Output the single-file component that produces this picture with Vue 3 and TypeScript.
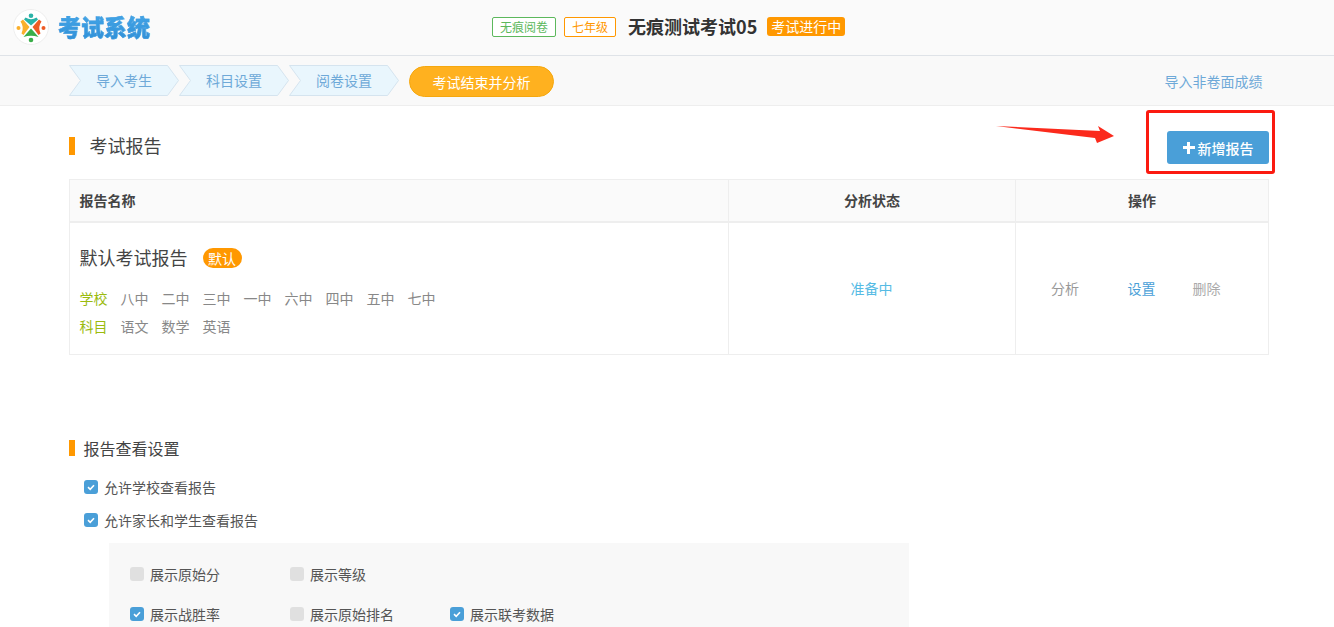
<script setup lang="ts">
interface Step { label: string }
const steps: Step[] = [{ label: '导入考生' }, { label: '科目设置' }, { label: '阅卷设置' }]
const schools: string[] = ['八中', '二中', '三中', '一中', '六中', '四中', '五中', '七中']
const subjects: string[] = ['语文', '数学', '英语']
const optionRows: { label: string; on: boolean }[][] = [
  [{ label: '展示原始分', on: false }, { label: '展示等级', on: false }],
  [{ label: '展示战胜率', on: true }, { label: '展示原始排名', on: false }, { label: '展示联考数据', on: true }],
]
</script>

<template>
  <div class="page">
    <header class="top">
      <div class="brand">
        <svg class="logo" viewBox="0 0 36 36" width="36" height="36">
          <circle cx="18" cy="18" r="17.5" fill="#fff" stroke="#eee" />
          <circle cx="18" cy="6.7" r="2.3" fill="#2bb3a8" />
          <path d="M12.5 8.5 Q18 12 23.5 8.5 L25 10.5 L18 16.5 L11 10.5 Z" fill="#2bb3a8" />
          <circle cx="5.5" cy="19" r="2" fill="#fbb02c" />
          <path d="M10 10.5 L16.5 18 L10.5 26 L8.5 24.5 Q11.5 18 7.5 12.5 Z" fill="#fbb02c" />
          <circle cx="30.5" cy="19" r="2" fill="#ee5a24" />
          <path d="M26 10.5 L19.5 18 L25.5 26 L27.5 24.5 Q24.5 18 28.5 12.5 Z" fill="#ee5a24" />
          <circle cx="18" cy="31" r="2.3" fill="#3bae4a" />
          <path d="M18 19.5 L25.5 28 Q18 25.5 10.5 28 Z" fill="#3bae4a" />
        </svg>
        <span class="brand-name">考试系统</span>
      </div>
      <div class="exam-info">
        <span class="tag tag-green">无痕阅卷</span>
        <span class="tag tag-orange">七年级</span>
        <span class="exam-name">无痕测试考试05</span>
        <span class="tag-solid">考试进行中</span>
      </div>
    </header>

    <nav class="subbar">
      <div class="steps">
        <div v-for="s in steps" :key="s.label" class="step">
          <svg class="step-bg" viewBox="0 0 110 31" width="110" height="31">
            <polygon points="0.5,0.5 98.5,0.5 109.5,15.5 98.5,30.5 0.5,30.5 11.5,15.5" fill="#e9f6fd" stroke="#d5e4ef" />
          </svg>
          <span class="step-label">{{ s.label }}</span>
        </div>
        <div class="step-active">考试结束并分析</div>
      </div>
      <a class="import-link">导入非卷面成绩</a>
    </nav>

    <main class="content">
      <div class="report-head">
        <h2 class="title-lg">考试报告</h2>
        <div class="add-wrap">
          <button class="add-btn"><span class="plus"></span>新增报告</button>
          <span class="red-box"></span>
          <svg class="arrow" viewBox="0 0 120 18" width="120" height="18">
            <polygon points="0,0 104,5 102,0 118,10 101,17 99,12" fill="#fb2a1c" />
          </svg>
        </div>
      </div>

      <div class="table">
        <div class="row row-head">
          <div class="col col-name">报告名称</div>
          <div class="col col-status">分析状态</div>
          <div class="col col-ops">操作</div>
        </div>
        <div class="row row-body">
          <div class="col col-name">
            <div class="report-title">
              <span>默认考试报告</span>
              <span class="badge">默认</span>
            </div>
            <div class="meta">
              <span class="meta-label">学校</span>
              <span v-for="x in schools" :key="x">{{ x }}</span>
            </div>
            <div class="meta">
              <span class="meta-label">科目</span>
              <span v-for="x in subjects" :key="x">{{ x }}</span>
            </div>
          </div>
          <div class="col col-status status-text">准备中</div>
          <div class="col col-ops ops">
            <a class="op-a">分析</a>
            <a class="op-b">设置</a>
            <a class="op-c">删除</a>
          </div>
        </div>
      </div>

      <section class="settings">
        <h3 class="title-sm">报告查看设置</h3>
        <label class="check check-top">
          <span class="box on"><svg viewBox="0 0 14 14" width="14" height="14"><path d="M4 7.2 L6.2 9.3 L10 5.2" fill="none" stroke="#fff" stroke-width="1.6" /></svg></span>
          允许学校查看报告
        </label>
        <label class="check check-top">
          <span class="box on"><svg viewBox="0 0 14 14" width="14" height="14"><path d="M4 7.2 L6.2 9.3 L10 5.2" fill="none" stroke="#fff" stroke-width="1.6" /></svg></span>
          允许家长和学生查看报告
        </label>
        <div class="panel">
          <div v-for="(row, i) in optionRows" :key="i" class="panel-row">
            <label v-for="o in row" :key="o.label" class="check check-opt">
              <span class="box" :class="{ on: o.on }">
                <svg v-if="o.on" viewBox="0 0 14 14" width="14" height="14"><path d="M4 7.2 L6.2 9.3 L10 5.2" fill="none" stroke="#fff" stroke-width="1.6" /></svg>
              </span>
              {{ o.label }}
            </label>
          </div>
        </div>
      </section>
    </main>
  </div>
</template>

<style>
html, body { margin: 0; overflow: hidden; background: #fff; }
</style>

<style scoped>
.page {
  width: 1334px;
  height: 627px;
  overflow: hidden;
  font-family: "Noto Sans CJK SC", "Noto Sans", sans-serif;
  font-size: 14px;
  color: #444;
  background: #fff;
}
.top {
  height: 55px;
  box-sizing: content-box;
  border-bottom: 1px solid #dfe3e8;
  background: #fafafa;
  display: flex;
  align-items: center;
  position: relative;
}
.brand { display: flex; align-items: center; padding: 0 0 3px 13px; gap: 9px; width: 300px; box-sizing: content-box; }
.logo { display: block; margin-top: 1px; }
.brand-name {
  font-size: 23px;
  font-weight: 900;
  line-height: 32px;
  background: linear-gradient(180deg, #45a8ea, #2f8fd6);
  -webkit-background-clip: text;
  background-clip: text;
  color: transparent;
  -webkit-text-stroke: 0.4px #3d9be0;
}
.exam-info { display: flex; align-items: center; margin-left: 179px; padding-bottom: 2px; }
.tag {
  box-sizing: border-box;
  height: 20px;
  line-height: 18px;
  font-size: 12px;
  padding: 0 7px;
  border-radius: 2px;
  border: 1px solid;
  background: #fff;
}
.tag-green { color: #5cb85c; border-color: #5cb85c; margin-right: 8px; }
.tag-orange { color: #ff9800; border-color: #ff9800; margin-right: 12px; }
.exam-name { font-size: 18px; font-weight: 700; color: #333; margin: 0 10px 2px 0; line-height: 24px; }
.tag-solid {
  height: 19px;
  line-height: 19px;
  font-size: 14px;
  padding: 0 4px;
  border-radius: 3px;
  background: #ff9800;
  color: #fff;
}
.subbar {
  height: 49px;
  border-bottom: 1px solid #eee;
  background: #f9f9f9;
  display: flex;
  align-items: center;
  justify-content: space-between;
  padding: 0 71px 0 69px;
}
.steps { display: flex; align-items: center; }
.step { position: relative; width: 110px; height: 31px; margin-top: -1px; }
.step-bg { position: absolute; left: 0; top: 0; }
.step-label {
  position: relative;
  display: block;
  padding-left: 27px;
  line-height: 31px;
  font-size: 14px;
  color: #6ea9d8;
}
.step-active {
  margin: 1px 0 0 10px;
  width: 145px;
  height: 31px;
  box-sizing: border-box;
  border: 1px solid #f5a80f;
  border-radius: 16px;
  background: #ffb11f;
  color: #fff;
  font-size: 14px;
  line-height: 31px;
  text-align: center;
}
.import-link { color: #6ea9d8; font-size: 14px; margin-right: 0.5px; }
.content { padding: 0 65px 0 69px; }
.report-head {
  height: 73px;
  display: flex;
  align-items: flex-end;
  justify-content: space-between;
}
.title-lg {
  margin: 0 0 24px;
  font-size: 18px;
  font-weight: 400;
  line-height: 16px;
  padding-bottom: 2px;
  color: #444;
  border-left: 6px solid #ff9800;
  padding-left: 14.5px;
}
.add-wrap { position: relative; margin-bottom: 15px; }
.add-btn {
  display: flex;
  align-items: center;
  justify-content: center;
  width: 102px;
  height: 33px;
  border: 0;
  border-radius: 3px;
  background: #4a9fd8;
  color: #fff;
  font-family: inherit;
  font-size: 14px;
  font-weight: 500;
  padding: 0;
  gap: 3px;
}
.plus {
  width: 12px;
  height: 12px;
  background:
    linear-gradient(#fff, #fff) center / 12px 3px no-repeat,
    linear-gradient(#fff, #fff) center / 3px 12px no-repeat;
}
.red-box {
  position: absolute;
  left: -21px;
  top: -21px;
  width: 129px;
  height: 64px;
  box-sizing: border-box;
  border: 3px solid #fb1a10;
  border-radius: 3px;
  pointer-events: none;
}
.arrow { position: absolute; left: -171px; top: -5px; }
.table { width: 1200px; border: 1px solid #eee; box-sizing: border-box; }
.row { display: flex; }
.row-head {
  height: 43px;
  background: #fafafa;
  border-bottom: 2px solid #eee;
  box-sizing: border-box;
  font-size: 14px;
  font-weight: 700;
  color: #444;
}
.row-body { height: 131px; }
.col { box-sizing: border-box; }
.col-name { width: 658px; padding-left: 9.5px; }
.col-status { width: 287px; border-left: 1px solid #eee; text-align: center; }
.col-ops { flex: 1; border-left: 1px solid #eee; text-align: center; }
.row-head .col { line-height: 40px; }
.report-title {
  display: flex;
  align-items: center;
  gap: 15px;
  height: 20px;
  margin-top: 25px;
  font-size: 18px;
  line-height: 18px;
  color: #444;
}
.report-title > span:first-child { margin-bottom: 2px; }
.badge {
  width: 39px;
  height: 20px;
  line-height: 20px;
  text-align: center;
  border-radius: 10px;
  background: #ff9800;
  color: #fff;
  font-size: 14px;
}
.meta {
  display: flex;
  gap: 13px;
  color: #888;
  font-size: 14px;
  line-height: 28px;
}
.report-title + .meta { margin-top: 16px; }
.meta-label { color: #9bbb0e; }
.status-text { line-height: 131px; color: #56bbe4; font-size: 14px; padding-right: 1px; }
.ops { display: flex; align-items: center; padding: 0 0 1px 35px; gap: 49px; font-size: 14px; }
.op-a { color: #999; }
.op-b { color: #4a9fd8; margin-left: -0.5px; }
.op-c { color: #aaa; margin-left: -12px; }
.settings { margin-top: 85px; }
.title-sm {
  margin: 0 0 14px;
  font-size: 16px;
  font-weight: 400;
  line-height: 16px;
  color: #444;
  border-left: 6px solid #ff9800;
  padding-left: 8.5px;
}
.check { display: flex; align-items: center; color: #555; font-size: 14px; }
.check-top { height: 33px; padding-left: 15px; }
.box {
  width: 14px;
  height: 14px;
  margin-right: 6px;
  border-radius: 3px;
  background: #e0e0e0;
  flex: none;
  display: block;
}
.box.on { background: #4a9fd8; }
.box svg { display: block; }
.panel {
  margin: 7px 0 0 40px;
  width: 800px;
  height: 100px;
  background: #f8f8f8;
  padding: 11px 0 0 21px;
  box-sizing: border-box;
}
.panel-row { display: flex; height: 40px; align-items: center; }
.check-opt { width: 160px; }
</style>
